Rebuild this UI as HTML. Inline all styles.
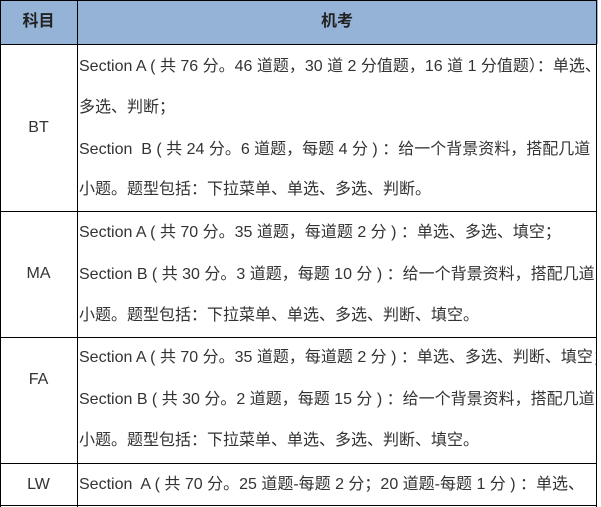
<!DOCTYPE html>
<html><head><meta charset="utf-8"><style>
body{margin:0;width:601px;height:507px;background:#fff;position:relative;overflow:hidden;font-family:"Liberation Sans","Noto Sans CJK SC",sans-serif;color:#333;font-size:16px}
.h{position:absolute;background:#000}
.t{position:absolute;white-space:nowrap;line-height:42px;height:42px}
.c{position:absolute;left:78px;width:518px;overflow:hidden;height:507px;top:0}
.lab{position:absolute;left:0;width:77px;text-align:center;line-height:42px}
</style></head><body>
<div style="position:absolute;left:0;top:0;width:598px;height:44px;background:#95b3d7"></div>
<div class="lab" style="top:1px;font-weight:bold;color:#222">科目</div>
<div class="lab" style="top:1px;left:77px;width:520px;font-weight:bold;color:#222">机考</div>
<div class="h" style="left:0;top:0;width:1px;height:507px"></div>
<div class="h" style="left:77px;top:0;width:1px;height:507px"></div>
<div class="h" style="left:596px;top:0;width:1px;height:507px"></div>
<div class="h" style="left:0;top:0;width:597px;height:1px"></div>
<div class="h" style="left:0;top:44px;width:597px;height:1px"></div>
<div class="h" style="left:0;top:211px;width:597px;height:1px"></div>
<div class="h" style="left:0;top:337px;width:597px;height:1px"></div>
<div class="h" style="left:0;top:463px;width:597px;height:1px"></div>
<div class="h" style="left:0;top:505px;width:597px;height:1px"></div>
<div class="lab" style="top:107px">BT</div>
<div class="lab" style="top:253px">MA</div>
<div class="lab" style="top:359px">FA</div>
<div class="lab" style="top:464px">LW</div>
<div class="c">
<div class="t" style="left:1px;top:46px">Section A ( 共 76 分。46 道题，30 道 2 分值题，16 道 1 分值题）：单选、</div>
<div class="t" style="left:1px;top:87px">多选、判断；</div>
<div class="t" style="left:1px;top:129px">Section&nbsp; B ( 共 24 分。6 道题，每题 4 分 ) ：给一个背景资料，搭配几道</div>
<div class="t" style="left:1px;top:169px">小题。题型包括：下拉菜单、单选、多选、判断。</div>
<div class="t" style="left:1px;top:212px">Section A ( 共 70 分。35 道题，每道题 2 分 ) ：单选、多选、填空；</div>
<div class="t" style="left:1px;top:254px">Section B ( 共 30 分。3 道题，每题 10 分 ) ：给一个背景资料，搭配几道</div>
<div class="t" style="left:1px;top:295px">小题。题型包括：下拉菜单、单选、多选、判断、填空。</div>
<div class="t" style="left:1px;top:337px">Section A ( 共 70 分。35 道题，每道题 2 分 ) ：单选、多选、判断、填空；</div>
<div class="t" style="left:1px;top:379px">Section B ( 共 30 分。2 道题，每题 15 分 ) ：给一个背景资料，搭配几道</div>
<div class="t" style="left:1px;top:420px">小题。题型包括：下拉菜单、单选、多选、判断、填空。</div>
<div class="t" style="left:1px;top:464px">Section&nbsp; A ( 共 70 分。25 道题-每题 2 分；20 道题-每题 1 分 ) ：单选、</div>
</div>
</body></html>
